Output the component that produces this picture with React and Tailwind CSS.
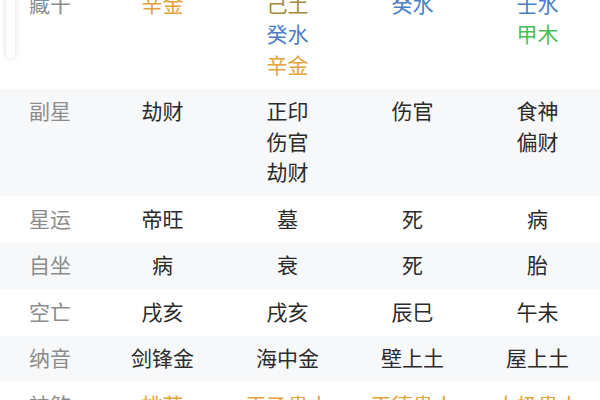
const C = {
  jin: 'text-[#e6a23c]',
  tu: 'text-[#a58a3c]',
  shui: 'text-[#4a7fc8]',
  mu: 'text-[#48bd58]',
  dark: 'text-[#2b2b2b]',
};

const rows = [
  {
    label: '藏干',
    cells: [
      [['辛金', C.jin]],
      [['己土', C.tu], ['癸水', C.shui], ['辛金', C.jin]],
      [['癸水', C.shui]],
      [['壬水', C.shui], ['甲木', C.mu]],
    ],
  },
  {
    label: '副星',
    cells: [[['劫财']], [['正印'], ['伤官'], ['劫财']], [['伤官']], [['食神'], ['偏财']]],
  },
  { label: '星运', cells: [[['帝旺']], [['墓']], [['死']], [['病']]] },
  { label: '自坐', cells: [[['病']], [['衰']], [['死']], [['胎']]] },
  { label: '空亡', cells: [[['戌亥']], [['戌亥']], [['辰巳']], [['午未']]] },
  { label: '纳音', cells: [[['剑锋金']], [['海中金']], [['壁上土']], [['屋上土']]] },
  {
    label: '神煞',
    cells: [[['桃花', C.jin]], [['天乙贵人', C.jin]], [['天德贵人', C.jin]], [['太极贵人', C.jin]]],
  },
];

export default function App() {
  return (
    <div
      className="relative w-[600px] h-[400px] overflow-hidden bg-white"
      style={{ fontFamily: '"Noto Sans CJK SC", "Noto Sans", sans-serif' }}
    >
      <div className="-mt-[19px]">
        {rows.map((row, i) => (
          <div
            key={row.label}
            className={`flex pt-[6.5px] pb-[9.5px] text-[21px] leading-[30.5px] ${i % 2 ? 'bg-[#f7f8f9]' : 'bg-white'}`}
          >
            <div className="w-[100px] text-center text-[#8c8c8c]">{row.label}</div>
            {row.cells.map((lines, j) => (
              <div key={j} className="w-[125px] flex flex-col items-center">
                {lines.map(([t, cls], k) => (
                  <span key={k} className={cls || C.dark}>{t}</span>
                ))}
              </div>
            ))}
          </div>
        ))}
      </div>

      {/* scroll thumb overlay */}
      <div className="absolute left-[6px] -top-[10px] w-[9px] h-[68px] rounded-full bg-white shadow-[0_0_6px_rgba(0,0,0,0.14)]" />
    </div>
  );
}
